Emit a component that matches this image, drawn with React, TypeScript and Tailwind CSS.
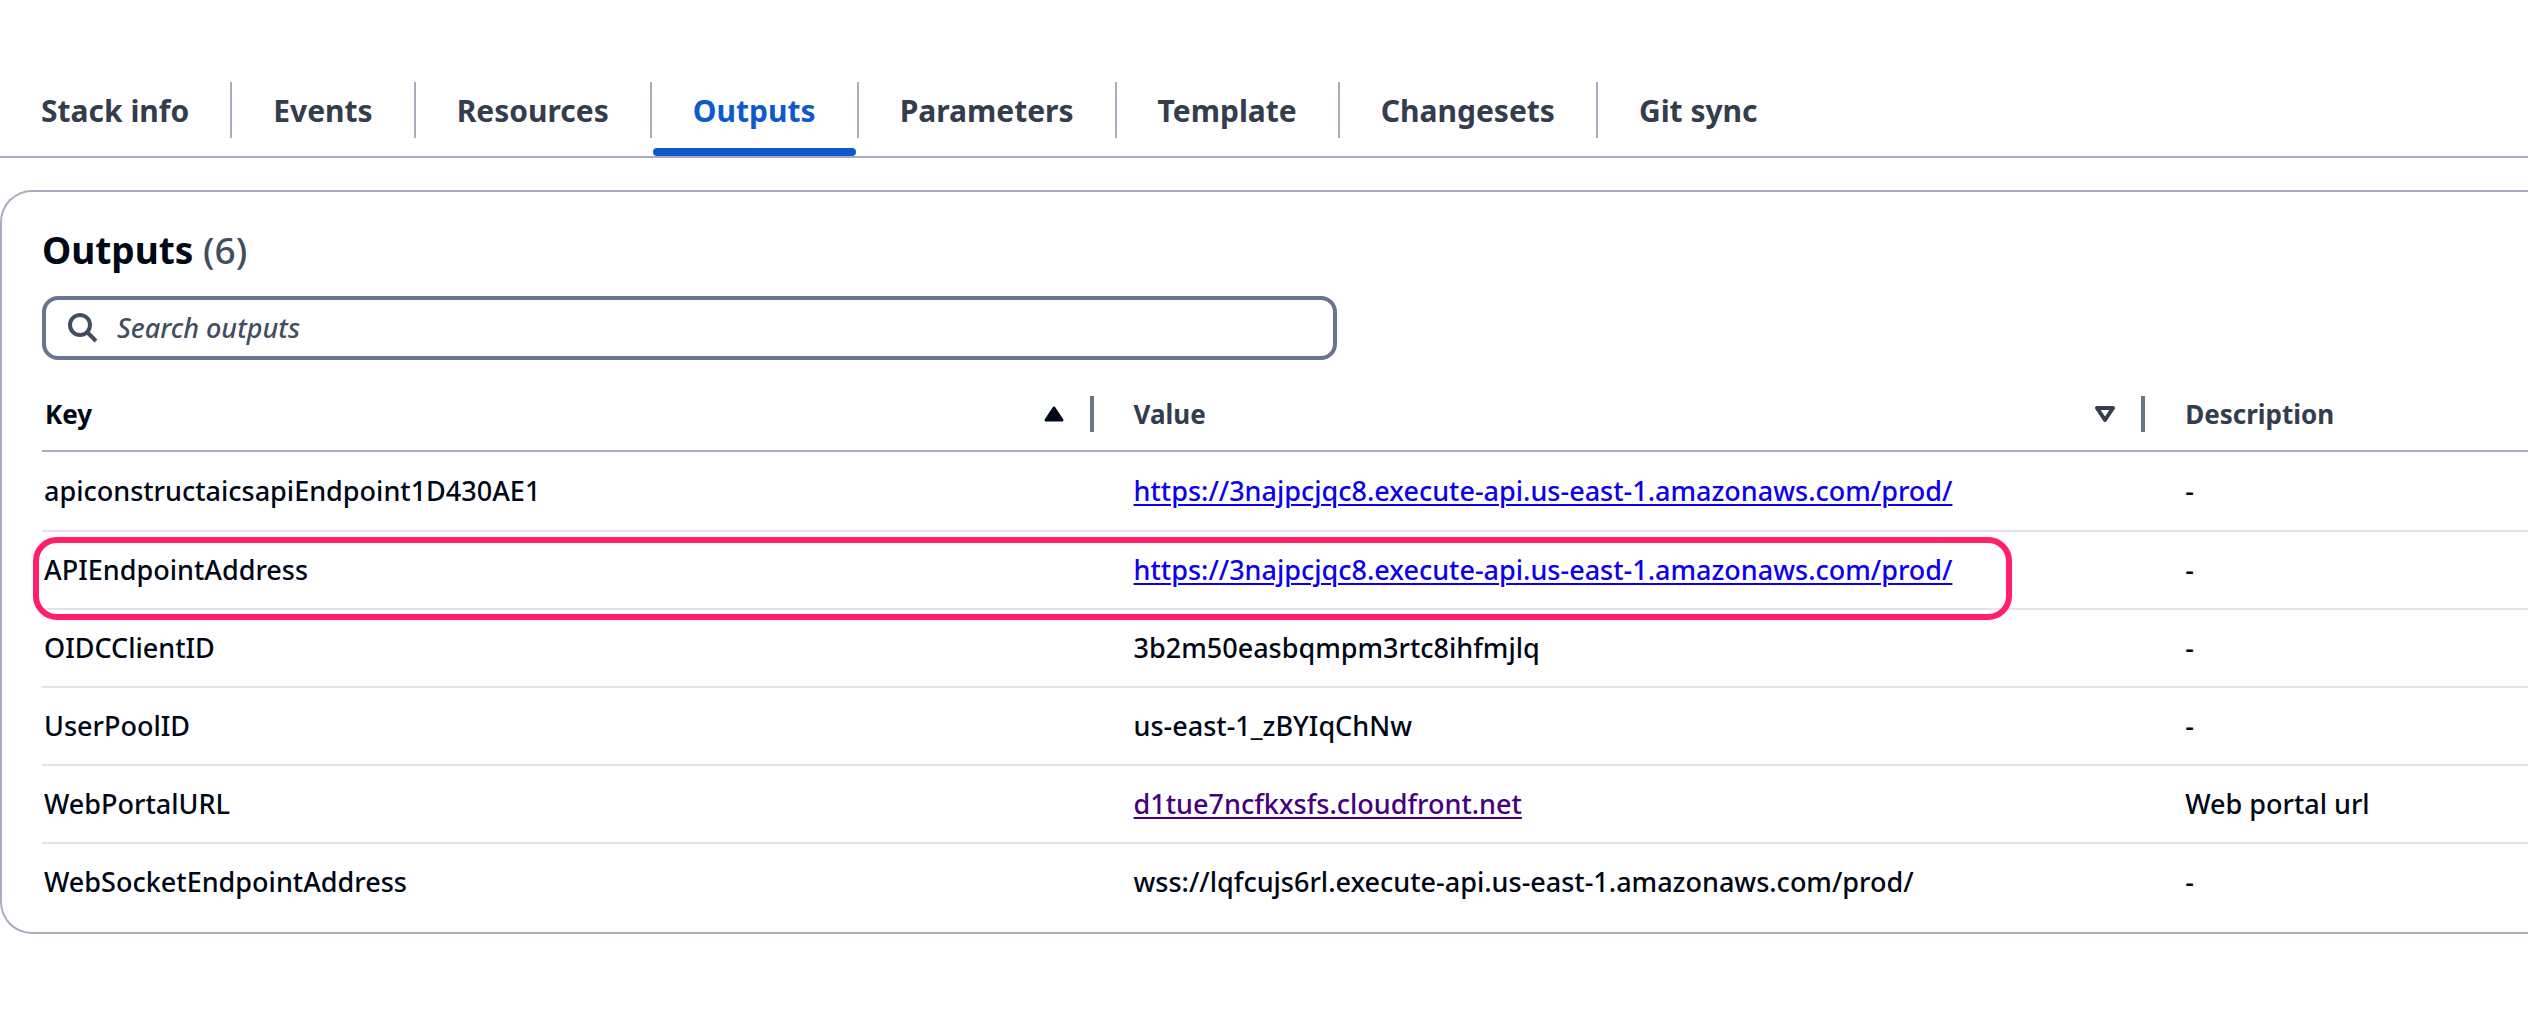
import React from "react";

const tabs = ["Stack info", "Events", "Resources", "Outputs", "Parameters", "Template", "Changesets", "Git sync"];

type Output = {
  key: string;
  value: string;
  href?: string;
  visited?: boolean;
  description: string;
  highlighted?: boolean;
};

const outputs: Output[] = [
  {
    key: "apiconstructaicsapiEndpoint1D430AE1",
    value: "https://3najpcjqc8.execute-api.us-east-1.amazonaws.com/prod/",
    href: "#api",
    description: "-",
  },
  {
    key: "APIEndpointAddress",
    value: "https://3najpcjqc8.execute-api.us-east-1.amazonaws.com/prod/",
    href: "#api-address",
    description: "-",
    highlighted: true,
  },
  { key: "OIDCClientID", value: "3b2m50easbqmpm3rtc8ihfmjlq", description: "-" },
  { key: "UserPoolID", value: "us-east-1_zBYIqChNw", description: "-" },
  {
    key: "WebPortalURL",
    value: "d1tue7ncfkxsfs.cloudfront.net",
    href: "#portal",
    visited: true,
    description: "Web portal url",
  },
  {
    key: "WebSocketEndpointAddress",
    value: "wss://lqfcujs6rl.execute-api.us-east-1.amazonaws.com/prod/",
    description: "-",
  },
];

function Tabs() {
  return (
    <nav role="tablist" aria-label="Stack details" className="flex h-[76px] items-start border-b-2 border-[#a6aebd]">
      {tabs.map((tab, i) => {
        const active = tab === "Outputs";
        return (
          <button
            key={tab}
            type="button"
            role="tab"
            aria-selected={active}
            className={
              "relative h-14 px-[41px] text-[30px] leading-[58px] font-bold " +
              (i < tabs.length - 1 ? "border-r-2 border-[#a6aebd] " : "") +
              (active ? "text-[#0f5acb]" : "text-[#333d4d]")
            }
          >
            {tab}
            {active && <span className="absolute inset-x-px top-[66px] h-2 rounded-[4px] bg-[#0f5acb]" />}
          </button>
        );
      })}
    </nav>
  );
}

function SearchBox() {
  return (
    <label className="mt-5 flex h-16 w-[52.1%] items-center rounded-2xl border-4 border-[#68758a] pl-[21px]">
      <svg viewBox="0 0 32 32" className="size-8 shrink-0" fill="none" stroke="#424e60" strokeWidth="4">
        <circle cx="13" cy="13" r="10" />
        <path d="M20 20 L29 29" />
      </svg>
      <input
        type="search"
        aria-label="Search outputs"
        placeholder="Search outputs"
        className="ml-[18px] min-w-0 flex-1 bg-transparent text-[27px] font-medium italic outline-none placeholder:text-[#424e60]"
      />
    </label>
  );
}

function SortAscending() {
  return (
    <svg viewBox="0 0 22 18" className="h-[18px] w-[22px]" fill="#000716" stroke="#000716" strokeWidth="3" strokeLinejoin="round">
      <path d="M11 3 L19 15 H3 Z" />
    </svg>
  );
}

function SortNone() {
  return (
    <svg viewBox="0 0 22 18" className="h-[18px] w-[22px]" fill="none" stroke="#333d4d" strokeWidth="4" strokeLinejoin="round">
      <path d="M3 3 H19 L11 15 Z" />
    </svg>
  );
}

function OutputsTable() {
  return (
    <table className="mt-[14px] w-full table-fixed border-separate border-spacing-0 text-left">
      <colgroup>
        <col className="w-[42.3%]" />
        <col className="w-[42.3%]" />
        <col />
      </colgroup>
      <thead>
        <tr className="h-[78px] text-[26px] font-bold">
          <th scope="col" aria-sort="ascending" className="border-b-2 border-[#a6aebd] px-0 pt-1 pb-0 text-[#000716]">
            <button type="button" className="flex h-9 w-full items-center justify-between border-r-4 border-[#68758a] pr-[25px] pl-[3px]">
              Key
              <SortAscending />
            </button>
          </th>
          <th scope="col" className="border-b-2 border-[#a6aebd] px-0 pt-1 pb-0 text-[#333d4d]">
            <button type="button" className="flex h-9 w-full items-center justify-between border-r-4 border-[#68758a] pr-[25px] pl-10">
              Value
              <SortNone />
            </button>
          </th>
          <th scope="col" className="border-b-2 border-[#a6aebd] pt-1 pr-0 pb-0 pl-10 text-[#333d4d]">
            Description
          </th>
        </tr>
      </thead>
      <tbody className="text-[27px] font-medium text-[#000716] [&>tr:first-child]:h-20 [&>tr:last-child>td]:border-transparent">
        {outputs.map((o) => (
          <tr key={o.key} className="relative h-[78px]">
            <td className="border-b-2 border-[#e3e4e9] py-0 pr-0 pl-0.5">
              {o.key}
              {o.highlighted && (
                <span className="pointer-events-none absolute top-[5px] left-[-9px] h-[83px] w-[79.6%] rounded-[24px] border-[6px] border-[#ff2068]" />
              )}
            </td>
            <td className="border-b-2 border-[#e3e4e9] py-0 pr-0 pl-10">
              {o.href ? (
                <a href={o.href} className={"underline decoration-2 underline-offset-[3px] " + (o.visited ? "text-[#45007e]" : "text-[#0d00ee]")}>
                  {o.value}
                </a>
              ) : (
                o.value
              )}
            </td>
            <td className="border-b-2 border-[#e3e4e9] py-0 pr-0 pl-10">{o.description}</td>
          </tr>
        ))}
      </tbody>
    </table>
  );
}

export default function App() {
  return (
    <main className="min-h-screen overflow-x-hidden bg-white pt-[82px] pb-20 font-['Noto_Sans',sans-serif]">
      <Tabs />
      <section className="mt-8 rounded-l-[32px] border-2 border-r-0 border-[#a6aebd] pt-8 pb-2.5 pl-10">
        <h2 className="text-[37px] leading-[52px] font-bold text-[#000716]">
          Outputs <span className="font-medium text-[#424e60]">(6)</span>
        </h2>
        <SearchBox />
        <OutputsTable />
      </section>
    </main>
  );
}
